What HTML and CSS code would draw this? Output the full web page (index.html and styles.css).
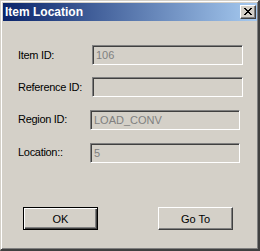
FILE: index.html
```html
<!DOCTYPE html>
<html lang="en">
<head>
  <meta charset="UTF-8" />
  <title>Item Location</title>
  <link rel="stylesheet" href="styles.css">
</head>
<body>
  <div class="window">
    <div class="titlebar">
      <span class="title">Item Location</span>
      <button class="close-btn" aria-label="Close">
        <svg width="8" height="7" viewBox="0 0 8 7" shape-rendering="crispEdges">
          <path d="M0 0h2v1H0zM1 1h2v1H1zM2 2h1v1H2zM5 2h1v1H5zM3 3h2v1H3zM2 4h1v1H2zM5 4h1v1H5zM1 5h2v1H1zM0 6h2v1H0zM6 0h2v1H6zM5 1h2v1H5zM5 5h2v1H5zM6 6h2v1H6zM3 2h2v1H3zM3 4h2v1H3z" fill="#000"/>
        </svg>
      </button>
    </div>

    <div class="form">
      <div class="row">
        <label>Item ID:</label>
        <div class="field">106</div>
      </div>
      <div class="row">
        <label>Reference ID:</label>
        <div class="field"></div>
      </div>
      <div class="row shift">
        <label>Region ID:</label>
        <div class="field">LOAD_CONV</div>
      </div>
      <div class="row shift">
        <label>Location::</label>
        <div class="field">5</div>
      </div>
    </div>

    <div class="buttons">
      <button class="btn default">OK</button>
      <button class="btn">Go To</button>
    </div>
  </div>
</body>
</html>
```

FILE: styles.css
```css
body {
  margin: 0;
  font-family: 'Liberation Sans', Arial, sans-serif;
  font-size: 11px;
  background: #d4d0c8;
}
.window {
  width: 260px;
  height: 251px;
  box-sizing: border-box;
  background: #d4d0c8;
  border-style: solid;
  border-width: 1px 2px 2px 1px;
  border-color: #d4d0c8 #404040 #404040 #d4d0c8;
  box-shadow: inset 1px 1px #fff, inset -1px -1px #808080;
  padding: 2px 1px 1px 2px;
}
.titlebar {
  height: 18px;
  display: flex;
  align-items: center;
  justify-content: space-between;
  padding: 0 1px 0 2px;
  background: linear-gradient(90deg, #0a246a, #a6caf0);
}
.title {
  color: #fff;
  font-weight: bold;
  font-size: 12px;
  line-height: 18px;
}
.close-btn {
  width: 16px;
  height: 14px;
  padding: 0;
  margin: 0;
  display: flex;
  align-items: center;
  justify-content: center;
  background: #d4d0c8;
  border-style: solid;
  border-width: 1px;
  border-color: #fff #404040 #404040 #fff;
  box-shadow: inset -1px -1px #808080;
}
.close-btn svg {
  margin: 0 1px 1px 0;
}
.form {
  display: flex;
  flex-direction: column;
  gap: 12px;
  padding: 24px 0 0 15px;
}
.row {
  display: flex;
  align-items: center;
  height: 20px;
}
.row label {
  width: 74px;
  margin-top: -1px;
  letter-spacing: -0.3px;
  color: #000;
}
.row.shift {
  margin-top: 1px;
}
.row.shift label {
  width: 72px;
  margin-top: -3px;
}
.field {
  width: 151px;
  height: 20px;
  box-sizing: border-box;
  border-style: solid;
  border-width: 1px;
  border-color: #808080 #fff #fff #808080;
  box-shadow: inset 1px 1px #404040, inset -1px -1px #d4d0c8;
  padding: 0 3px;
  color: #808080;
  line-height: 18px;
}
.row.shift .field {
  width: 150px;
}
.buttons {
  display: flex;
  gap: 60px;
  padding: 44px 0 0 20px;
}
.btn {
  width: 75px;
  height: 23px;
  box-sizing: border-box;
  font-family: 'Liberation Sans', Arial, sans-serif;
  font-size: 11px;
  color: #000;
  background: #d4d0c8;
  border-style: solid;
  border-width: 1px;
  border-color: #fff #404040 #404040 #fff;
  box-shadow: inset -1px -1px #808080;
  padding: 0;
}
.btn.default {
  border-color: #000;
  box-shadow: inset 1px 1px #fff, inset -1px -1px #404040, inset -2px -2px #808080;
}
```
